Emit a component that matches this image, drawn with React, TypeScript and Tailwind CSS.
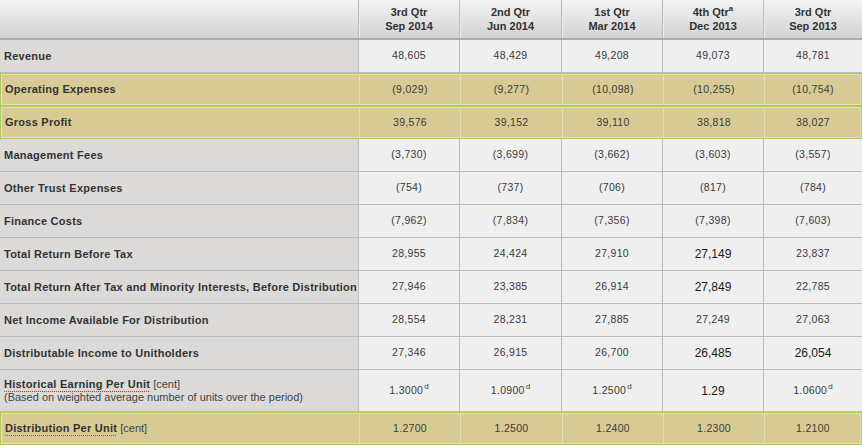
import React from 'react';

type Cell = { v: string; sup?: string; big?: boolean };
type Row = {
  label: string;
  unit?: string;
  note?: string;
  cells: Cell[];
  highlight?: boolean;
  dotted?: boolean;
};

const c = (v: string, extra: Partial<Cell> = {}): Cell => ({ v, ...extra });

const headers = [
  ['3rd Qtr', 'Sep 2014'],
  ['2nd Qtr', 'Jun 2014'],
  ['1st Qtr', 'Mar 2014'],
  ['4th Qtr', 'Dec 2013', 'a'],
  ['3rd Qtr', 'Sep 2013'],
];

const rows: Row[] = [
  { label: 'Revenue', cells: [c('48,605'), c('48,429'), c('49,208'), c('49,073'), c('48,781')] },
  { label: 'Operating Expenses', highlight: true, cells: [c('(9,029)'), c('(9,277)'), c('(10,098)'), c('(10,255)'), c('(10,754)')] },
  { label: 'Gross Profit', highlight: true, cells: [c('39,576'), c('39,152'), c('39,110'), c('38,818'), c('38,027')] },
  { label: 'Management Fees', cells: [c('(3,730)'), c('(3,699)'), c('(3,662)'), c('(3,603)'), c('(3,557)')] },
  { label: 'Other Trust Expenses', cells: [c('(754)'), c('(737)'), c('(706)'), c('(817)'), c('(784)')] },
  { label: 'Finance Costs', cells: [c('(7,962)'), c('(7,834)'), c('(7,356)'), c('(7,398)'), c('(7,603)')] },
  { label: 'Total Return Before Tax', cells: [c('28,955'), c('24,424'), c('27,910'), c('27,149', { big: true }), c('23,837')] },
  {
    label: 'Total Return After Tax and Minority Interests, Before Distribution',
    cells: [c('27,946'), c('23,385'), c('26,914'), c('27,849', { big: true }), c('22,785')],
  },
  { label: 'Net Income Available For Distribution', cells: [c('28,554'), c('28,231'), c('27,885'), c('27,249'), c('27,063')] },
  {
    label: 'Distributable Income to Unitholders',
    cells: [c('27,346'), c('26,915'), c('26,700'), c('26,485', { big: true }), c('26,054', { big: true })],
  },
  {
    label: 'Historical Earning Per Unit',
    unit: '[cent]',
    note: '(Based on weighted average number of units over the period)',
    dotted: true,
    cells: [c('1.3000', { sup: 'd' }), c('1.0900', { sup: 'd' }), c('1.2500', { sup: 'd' }), c('1.29', { big: true }), c('1.0600', { sup: 'd' })],
  },
  {
    label: 'Distribution Per Unit',
    unit: '[cent]',
    dotted: true,
    highlight: true,
    cells: [c('1.2700'), c('1.2500'), c('1.2400'), c('1.2300'), c('1.2100')],
  },
];

const grid = 'grid grid-cols-[358px_101px_102px_101px_101px_1fr]';

function Value({ cell }: { cell: Cell }) {
  if (cell.big) {
    return <span className="text-[12px] text-[#1a1a1a]">{cell.v}</span>;
  }
  return (
    <span className="text-[10.5px] tracking-[0.3px] text-[#3a3a3a]">
      {cell.v}
      {cell.sup && <sup className="text-[8px] relative -top-[5px] ml-[1px] tracking-normal">{cell.sup}</sup>}
    </span>
  );
}

export default function App() {
  return (
    <div className="w-[862px] h-[445px] overflow-hidden bg-white font-['Liberation_Sans',Arial,sans-serif] text-[#333]">
      {/* header */}
      <div className={`${grid} h-[40px] bg-gradient-to-b from-[#f4f4f4] to-[#d2d2d2] border-b-2 border-[#ababab]`}>
        <div />
        {headers.map(([q, d, sup], i) => (
          <div
            key={i}
            className="flex flex-col items-center justify-center border-l border-[#bdbdbd] shadow-[inset_1px_0_0_#ececec] text-[11px] font-bold leading-[14px] text-[#333]"
          >
            <span>
              {q}
              {sup && <sup className="text-[8px] font-bold relative -top-[5px]">{sup}</sup>}
            </span>
            <span>{d}</span>
          </div>
        ))}
      </div>

      {rows.map((r, i) => {
        const tall = !!r.note;
        const rowCls = r.highlight
          ? 'bg-[#d8ca94] border border-[#b2c85a] shadow-[inset_0_0_0_1px_#e9e1ad]'
          : 'border-b border-[#bcbcbc]';
        return (
          <div key={i} className={`${grid} ${tall ? 'h-[42px]' : 'h-[33px]'} ${rowCls}`}>
            <div
              className={`flex flex-col justify-center pl-[4px] text-[11px] leading-[13px] ${
                r.highlight ? '' : 'bg-[#dcdad8]'
              }`}
            >
              <div>
                <span
                  className={`font-bold tracking-[0.25px] text-[#333] ${
                    r.dotted ? 'underline decoration-dotted decoration-[#d03a2a] underline-offset-[3px]' : ''
                  }`}
                >
                  {r.label}
                </span>
                {r.unit && <span className="text-[#444]"> {r.unit}</span>}
              </div>
              {r.note && <div className="text-[#444]">{r.note}</div>}
            </div>
            {r.cells.map((cell, j) => (
              <div
                key={j}
                className={`flex items-center justify-center border-l ${
                  r.highlight ? 'border-[#e6ddb0]' : 'bg-[#efefef] border-[#bdbdbd]'
                }`}
              >
                <Value cell={cell} />
              </div>
            ))}
          </div>
        );
      })}
    </div>
  );
}
